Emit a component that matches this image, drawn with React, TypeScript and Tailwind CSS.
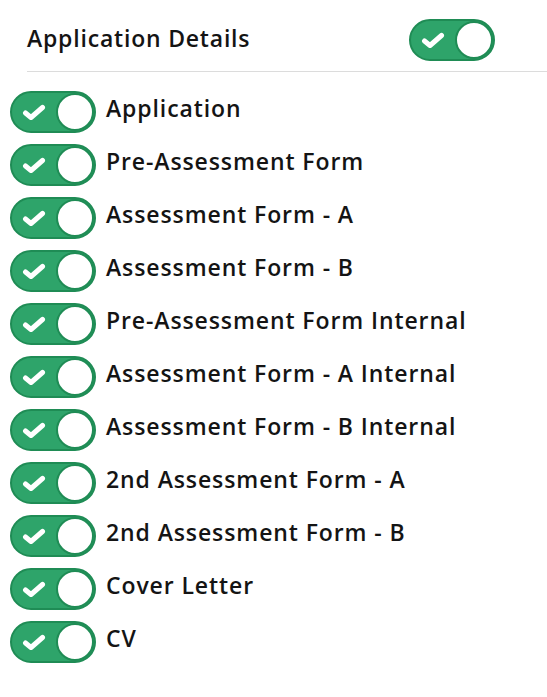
import React from 'react';

const items = [
  'Application',
  'Pre-Assessment Form',
  'Assessment Form - A',
  'Assessment Form - B',
  'Pre-Assessment Form Internal',
  'Assessment Form - A Internal',
  'Assessment Form - B Internal',
  '2nd Assessment Form - A',
  '2nd Assessment Form - B',
  'Cover Letter',
  'CV',
];

function Toggle() {
  return (
    <div className="flex items-center w-[86px] h-[42px] rounded-full bg-[#2ea46a] border-2 border-[#1f8c55] shrink-0">
      <svg width="24" height="17" viewBox="0 0 24 17" className="ml-[10px]">
        <path d="M3.5 9 L9 13.5 L20.5 3.5" fill="none" stroke="white" strokeWidth="5" strokeLinecap="round" strokeLinejoin="round" />
      </svg>
      <div className="ml-auto w-[38px] h-[38px] rounded-full bg-white border-2 border-[#1f8c55]" />
    </div>
  );
}

export default function App() {
  return (
    <div className="pt-[19px] bg-white min-h-screen text-[#141414]" style={{ fontFamily: '"Open Sans", sans-serif' }}>
      {/* Header */}
      <div className="ml-[27px] w-[468px] flex items-center justify-between">
        <span className="text-[23px] font-semibold tracking-[0.8px] -mt-[4px]">Application Details</span>
        <Toggle />
      </div>
      <div className="ml-[27px] mt-[10px] h-px bg-[#dcdcdc]" />

      {/* List */}
      <div className="mt-[19px] pl-[10px] flex flex-col gap-[11px]">
        {items.map((label, idx) => (
          <div key={idx} className="flex items-center gap-[10px]">
            <Toggle />
            <span className="text-[23px] font-semibold tracking-[0.9px] -mt-[8px]">{label}</span>
          </div>
        ))}
      </div>
    </div>
  );
}
